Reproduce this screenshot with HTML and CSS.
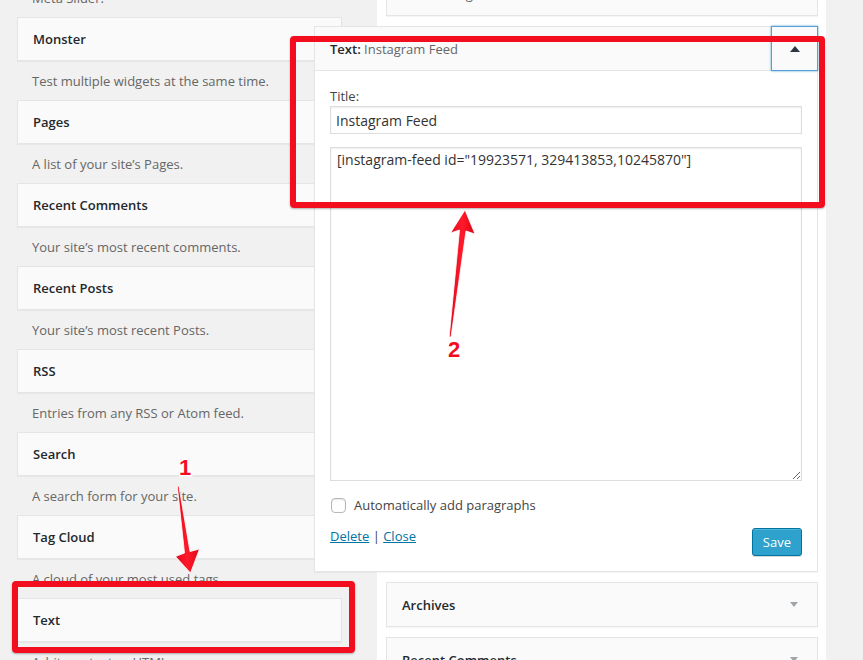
FILE: index.html
```html
<!DOCTYPE html>
<html lang="en">
<head>
<meta charset="utf-8">
<title>Widgets</title>
<link rel="stylesheet" href="styles.css">
</head>
<body>
<div class="screen">
  <div class="available">
    <div class="av-desc">Meta Slider.</div>
    <div class="av-top">Monster</div>
    <div class="av-desc">Test multiple widgets at the same time.</div>
    <div class="av-top">Pages</div>
    <div class="av-desc">A list of your site’s Pages.</div>
    <div class="av-top">Recent Comments</div>
    <div class="av-desc">Your site’s most recent comments.</div>
    <div class="av-top">Recent Posts</div>
    <div class="av-desc">Your site’s most recent Posts.</div>
    <div class="av-top">RSS</div>
    <div class="av-desc">Entries from any RSS or Atom feed.</div>
    <div class="av-top">Search</div>
    <div class="av-desc">A search form for your site.</div>
    <div class="av-top">Tag Cloud</div>
    <div class="av-desc">A cloud of your most used tags.</div>
    <div class="av-top">Text</div>
    <div class="av-desc">Arbitrary text or HTML.</div>
  </div>

  <div class="sidebar">
    <div class="sw">
      <div class="sw-top"><span class="t-name">Text:</span>&nbsp;<span class="t-inst">Instagram</span></div>
    </div>

    <div class="sw open">
      <div class="sw-top">
        <span class="t-name">Text:</span>&nbsp;<span class="t-inst">Instagram Feed</span>
        <span class="toggle"><span class="tri-up"></span></span>
      </div>
      <div class="sw-body">
        <label class="fl">Title:</label>
        <input class="ti" type="text" value="Instagram Feed">
        <textarea class="ta">[instagram-feed id="19923571, 329413853,10245870"]</textarea>
        <label class="cb-row"><input type="checkbox" class="cb"><span>Automatically add paragraphs</span></label>
        <div class="ctrl">
          <div class="links"><a href="#">Delete</a> | <a href="#">Close</a></div>
          <button class="save">Save</button>
        </div>
      </div>
    </div>

    <div class="sw">
      <div class="sw-top">Archives<span class="sw-arrow"><span class="tri-down"></span></span></div>
    </div>
    <div class="sw">
      <div class="sw-top">Recent Comments<span class="sw-arrow"><span class="tri-down"></span></span></div>
    </div>
  </div>
</div>

<div class="redbox box2"></div>
<div class="redbox box1"></div>

<svg class="marks" width="863" height="660" viewBox="0 0 863 660">
  <defs>
    <linearGradient id="rg" x1="0" y1="0" x2="1" y2="0">
      <stop offset="0" stop-color="#e00818"/>
      <stop offset="0.5" stop-color="#ff1a2a"/>
      <stop offset="1" stop-color="#d90615"/>
    </linearGradient>
  </defs>
  <polygon class="arrow" points="177.3,486 184.5,553 175.5,556.5 190.5,573 199.5,549 190,551.5 178.9,486"/>
  <polygon class="arrow" points="449.2,337 459.5,230 450.5,233 465,210 475,234 466,231 451,337"/>
  <text class="num" x="185" y="475">1</text>
  <text class="num" x="454" y="357">2</text>
</svg>
</body>
</html>
```

FILE: styles.css
```css
* { box-sizing: border-box; }

html, body {
  margin: 0;
  padding: 0;
}

body {
  width: 863px;
  height: 660px;
  overflow: hidden;
  position: relative;
  background: #f1f1f1;
  font-family: "Open Sans", "Noto Sans", sans-serif;
  font-size: 13px;
  color: #444;
}

.screen {
  display: flex;
  align-items: flex-start;
  padding-left: 17px;
}

/* Available widgets (left) */
.available {
  flex: none;
  width: 325px;
  margin-top: -22px;
}

.av-desc {
  height: 39px;
  display: flex;
  align-items: center;
  padding: 0 15px;
  line-height: 18px;
  color: #666;
  white-space: nowrap;
}

.av-top {
  height: 44px;
  display: flex;
  align-items: center;
  padding: 0 15px;
  background: #fafafa;
  border: 1px solid #e5e5e5;
  box-shadow: 0 1px 1px rgba(0, 0, 0, 0.04);
  font-size: 13px;
  font-weight: 600;
  color: #23282d;
}

/* Sidebar (right) */
.sidebar {
  flex: none;
  width: 449px;
  min-height: 720px;
  margin-left: 35px;
  margin-top: -29px;
  padding: 0 8px 0 9px;
  background: #fff;
  display: flex;
  flex-direction: column;
  gap: 10px;
}

.sw {
  background: #fafafa;
  border: 1px solid #e5e5e5;
  box-shadow: 0 1px 1px rgba(0, 0, 0, 0.04);
}

.sw-top {
  height: 43px;
  display: flex;
  align-items: center;
  padding-left: 15px;
  font-size: 13px;
  font-weight: 600;
  color: #23282d;
  white-space: nowrap;
}

.t-name { font-weight: 600; color: #23282d; }
.t-inst { font-weight: 400; color: #666; }

.sw-arrow {
  margin-left: auto;
  width: 46px;
  height: 100%;
  display: flex;
  align-items: center;
  justify-content: center;
}

.tri-down {
  width: 0;
  height: 0;
  border-left: 4px solid transparent;
  border-right: 4px solid transparent;
  border-top: 5px solid #a0a5aa;
}

.sw.open {
  position: relative;
  z-index: 1;
  margin-left: -72px;
  height: 546px;
  background: #fff;
}

.open .sw-top {
  height: 44px;
  background: #fafafa;
  border-bottom: 1px solid #e5e5e5;
}

.toggle {
  align-self: flex-start;
  margin: -1px -1px 0 auto;
  width: 47px;
  height: 45px;
  border: 1px solid #5b9dd9;
  box-shadow: 0 0 2px rgba(30, 140, 190, 0.8);
  background: #fafafa;
  display: flex;
  align-items: center;
  justify-content: center;
}

.tri-up {
  width: 0;
  height: 0;
  border-left: 5px solid transparent;
  border-right: 5px solid transparent;
  border-bottom: 6px solid #2a3642;
}

.sw-body {
  display: flex;
  flex-direction: column;
  padding: 0 15px 15px;
}

.fl {
  display: block;
  margin-top: 16px;
  line-height: 18px;
  color: #444;
}

.ti {
  display: block;
  width: 100%;
  height: 28px;
  margin: 1px 0 0;
  padding: 3px 5px;
  border: 1px solid #ddd;
  box-shadow: inset 0 1px 2px rgba(0, 0, 0, 0.07);
  font-family: "Open Sans", "Noto Sans", sans-serif;
  font-size: 14px;
  color: #333;
  background: #fff;
  outline: none;
}

.ta {
  display: block;
  width: 100%;
  height: 334px;
  margin: 13px 0 0;
  padding: 2px 6px;
  border: 1px solid #ddd;
  box-shadow: inset 0 1px 2px rgba(0, 0, 0, 0.07);
  font-family: "Open Sans", "Noto Sans", sans-serif;
  font-size: 14px;
  line-height: 20px;
  color: #333;
  background: #fff;
  outline: none;
}

.cb-row {
  display: flex;
  align-items: center;
  gap: 8px;
  margin-top: 14px;
  height: 20px;
  line-height: 20px;
  color: #444;
}

.cb {
  -webkit-appearance: none;
  appearance: none;
  margin: 0 0 0 1px;
  width: 15px;
  height: 15px;
  border: 1px solid #b4b9be;
  border-radius: 4px;
  background: #fff;
  box-shadow: inset 0 1px 2px rgba(0, 0, 0, 0.1);
}

.ctrl {
  display: flex;
  justify-content: space-between;
  align-items: flex-start;
  margin-top: 13px;
}

.links {
  margin-top: -1px;
  line-height: 18px;
  color: #444;
}

.links a {
  color: #0074a2;
  text-decoration: underline;
}

.save {
  height: 28px;
  padding: 0 10px;
  border: 1px solid #0074a2;
  border-radius: 3px;
  background: #2ea2cc;
  box-shadow: inset 0 1px 0 rgba(120, 200, 230, 0.5), 0 1px 0 rgba(0, 0, 0, 0.15);
  color: #fff;
  font-family: "Open Sans", "Noto Sans", sans-serif;
  font-size: 13px;
  line-height: 26px;
}

/* Annotation overlays */
.redbox {
  position: absolute;
  border: 6px solid #f20d1f;
  border-radius: 4px;
  box-shadow: 0 1px 2px rgba(0, 0, 0, 0.3);
  z-index: 5;
}

.box2 {
  left: 290px;
  top: 36px;
  width: 535px;
  height: 172px;
}

.box1 {
  left: 12px;
  top: 581px;
  width: 343px;
  height: 72px;
}

.marks {
  position: absolute;
  left: 0;
  top: 0;
  z-index: 6;
}

.arrow {
  fill: url(#rg);
  stroke: #fff;
  stroke-width: 0.8;
  stroke-linejoin: round;
}

.num {
  font-family: "Liberation Sans", Arial, sans-serif;
  font-size: 22px;
  font-weight: 700;
  fill: #f20d1f;
  stroke: #fff;
  stroke-width: 3px;
  paint-order: stroke;
  text-anchor: middle;
}
```
